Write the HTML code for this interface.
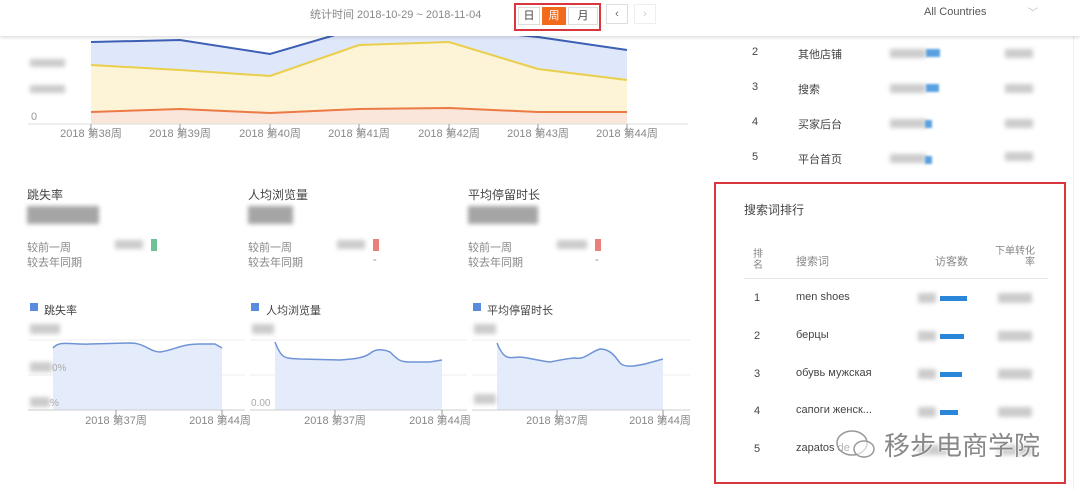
<!DOCTYPE html>
<html><head><meta charset="utf-8"><style>
*{margin:0;padding:0;box-sizing:border-box}
body{width:1080px;height:489px;background:#fff;position:relative;overflow:hidden;font-family:"Liberation Sans","Noto Sans CJK SC",sans-serif;color:#444;font-size:11px}
.a{position:absolute;white-space:nowrap}
.g{color:#888}
.blur{position:absolute;background:#bbb;filter:blur(2px);opacity:.75}
.hdr{position:absolute;left:0;top:0;width:1080px;height:36px;background:#fff;box-shadow:0 2px 3px rgba(0,0,0,.12);z-index:5}
</style></head><body>
<svg class="a" style="left:0;top:0" width="700" height="489">
<polygon points="91,42 180,40 270,54 359,28 449,28 538,37 627,50 627,124 91,124" fill="#dfe7fb"/>
<polygon points="91,65 180,70 270,76 359,45 449,42 538,69 627,80 627,124 91,124" fill="#fdf3d6"/>
<polygon points="91,112 180,109 270,113 359,109 449,108 538,112 627,112 627,124 91,124" fill="#fbe6dc"/>
<polyline points="91,42 180,40 270,54 359,28 449,28 538,37 627,50" fill="none" stroke="#3d5fb5" stroke-width="2"/>
<polyline points="91,65 180,70 270,76 359,45 449,42 538,69 627,80" fill="none" stroke="#e9cf4c" stroke-width="2"/>
<polyline points="91,112 180,109 270,113 359,109 449,108 538,112 627,112" fill="none" stroke="#ec7a45" stroke-width="2"/>
<line x1="28" y1="124" x2="688" y2="124" stroke="#ddd"/>
<g stroke="#999"><line x1="91" y1="124" x2="91" y2="134"/><line x1="180" y1="124" x2="180" y2="134"/><line x1="270" y1="124" x2="270" y2="134"/><line x1="359" y1="124" x2="359" y2="134"/><line x1="449" y1="124" x2="449" y2="134"/><line x1="538" y1="124" x2="538" y2="134"/><line x1="627" y1="124" x2="627" y2="134"/></g>
<g font-size="11" fill="#888" font-family="Liberation Sans,Noto Sans CJK SC,sans-serif" text-anchor="middle"><text x="91" y="137">2018 第38周</text><text x="180" y="137">2018 第39周</text><text x="270" y="137">2018 第40周</text><text x="359" y="137">2018 第41周</text><text x="449" y="137">2018 第42周</text><text x="538" y="137">2018 第43周</text><text x="627" y="137">2018 第44周</text></g>
<text x="31" y="120" font-size="11" fill="#999">0</text>
<g stroke="#eee"><line x1="28" y1="340" x2="245" y2="340"/><line x1="28" y1="375" x2="245" y2="375"/><line x1="250" y1="340" x2="467" y2="340"/><line x1="250" y1="375" x2="467" y2="375"/><line x1="472" y1="340" x2="690" y2="340"/><line x1="472" y1="375" x2="690" y2="375"/></g>
<path d="M53,348 C60,340 70,345 90,344 L130,343 C145,343 150,352 160,352 C175,350 180,344 200,344 L215,344 L222,348 L222,410 L53,410Z" fill="#e4ecfb"/>
<path d="M53,348 C60,340 70,345 90,344 L130,343 C145,343 150,352 160,352 C175,350 180,344 200,344 L215,344 L222,348" fill="none" stroke="#6e94d6" stroke-width="1.5"/>
<path d="M275,342 C282,360 285,358 300,359 L340,360 C355,359 365,358 372,352 C378,348 385,350 390,352 C398,360 400,362 410,362 L430,362 L442,360 L442,410 L275,410Z" fill="#e4ecfb"/>
<path d="M275,342 C282,360 285,358 300,359 L340,360 C355,359 365,358 372,352 C378,348 385,350 390,352 C398,360 400,362 410,362 L430,362 L442,360" fill="none" stroke="#6e94d6" stroke-width="1.5"/>
<path d="M497,343 C504,360 508,358 520,357 C530,358 535,360 550,362 C560,360 570,358 575,358 C585,360 590,352 600,349 C610,349 615,356 620,363 C625,368 635,366 645,364 L663,359 L663,410 L497,410Z" fill="#e4ecfb"/>
<path d="M497,343 C504,360 508,358 520,357 C530,358 535,360 550,362 C560,360 570,358 575,358 C585,360 590,352 600,349 C610,349 615,356 620,363 C625,368 635,366 645,364 L663,359" fill="none" stroke="#6e94d6" stroke-width="1.5"/>
<g stroke="#ccc"><line x1="28" y1="410" x2="245" y2="410"/><line x1="250" y1="410" x2="467" y2="410"/><line x1="472" y1="410" x2="690" y2="410"/></g>
<g stroke="#999"><line x1="116" y1="410" x2="116" y2="420"/><line x1="222" y1="410" x2="222" y2="420"/><line x1="335" y1="410" x2="335" y2="420"/><line x1="442" y1="410" x2="442" y2="420"/><line x1="557" y1="410" x2="557" y2="420"/><line x1="663" y1="410" x2="663" y2="420"/></g>
<g font-size="11" fill="#888" font-family="Liberation Sans,Noto Sans CJK SC,sans-serif" text-anchor="middle"><text x="116" y="424">2018 第37周</text><text x="220" y="424">2018 第44周</text><text x="335" y="424">2018 第37周</text><text x="440" y="424">2018 第44周</text><text x="557" y="424">2018 第37周</text><text x="660" y="424">2018 第44周</text></g>
<g font-size="10" fill="#aaa"><text x="52" y="371">0%</text><text x="50" y="406">%</text><text x="251" y="406">0.00</text></g>
</svg>
<div class="blur" style="left:30px;top:59px;width:35px;height:8px"></div>
<div class="blur" style="left:30px;top:85px;width:35px;height:8px"></div>
<div class="blur" style="left:30px;top:324px;width:30px;height:10px"></div>
<div class="blur" style="left:30px;top:362px;width:22px;height:10px"></div>
<div class="blur" style="left:30px;top:397px;width:20px;height:10px"></div>
<div class="blur" style="left:252px;top:324px;width:22px;height:10px"></div>
<div class="blur" style="left:474px;top:324px;width:22px;height:10px"></div>
<div class="blur" style="left:474px;top:394px;width:22px;height:10px"></div>

<div class="hdr">
<div class="a g" style="left:310px;top:6px;font-size:11px">统计时间 2018-10-29 ~ 2018-11-04</div>
<div class="a" style="left:514px;top:3px;width:87px;height:28px;border:2px solid #d9363e"></div>
<div class="a" style="left:518px;top:7px;width:22px;height:18px;border:1px solid #ddd;text-align:center;line-height:16px">日</div>
<div class="a" style="left:542px;top:7px;width:24px;height:18px;background:#f26a1b;color:#fff;text-align:center;line-height:18px">周</div>
<div class="a" style="left:568px;top:7px;width:30px;height:18px;border:1px solid #ddd;text-align:center;line-height:16px">月</div>
<div class="a" style="left:606px;top:4px;width:22px;height:20px;border:1px solid #ddd;text-align:center;line-height:18px;color:#666">‹</div>
<div class="a" style="left:634px;top:4px;width:22px;height:20px;border:1px solid #eee;text-align:center;line-height:18px;color:#ccc">›</div>
<div class="a" style="left:924px;top:6px;color:#555">All Countries</div>
<div class="a" style="left:1028px;top:4px;color:#bbb;font-size:10px">﹀</div>
</div>

<div class="a" style="left:27px;top:186px;font-size:12px">跳失率</div>
<div class="a" style="left:248px;top:186px;font-size:12px">人均浏览量</div>
<div class="a" style="left:468px;top:186px;font-size:12px">平均停留时长</div>
<div class="blur" style="left:27px;top:206px;width:72px;height:18px;background:#888"></div>
<div class="blur" style="left:248px;top:206px;width:45px;height:18px;background:#888"></div>
<div class="blur" style="left:468px;top:206px;width:70px;height:18px;background:#888"></div>
<div class="a g" style="left:27px;top:239px">较前一周</div><div class="a g" style="left:27px;top:254px">较去年同期</div>
<div class="a g" style="left:248px;top:239px">较前一周</div><div class="a g" style="left:248px;top:254px">较去年同期</div>
<div class="a g" style="left:468px;top:239px">较前一周</div><div class="a g" style="left:468px;top:254px">较去年同期</div>
<div class="blur" style="left:115px;top:240px;width:28px;height:9px"></div><div class="a" style="left:151px;top:239px;width:6px;height:12px;background:#6cc294"></div>
<div class="blur" style="left:337px;top:240px;width:28px;height:9px"></div><div class="a" style="left:373px;top:239px;width:6px;height:12px;background:#e9807c"></div>
<div class="blur" style="left:557px;top:240px;width:30px;height:9px"></div><div class="a" style="left:595px;top:239px;width:6px;height:12px;background:#e9807c"></div>
<div class="a g" style="left:373px;top:254px">-</div><div class="a g" style="left:595px;top:254px">-</div>
<div class="a" style="left:30px;top:303px;width:8px;height:8px;background:#5b8bdc"></div><div class="a" style="left:44px;top:302px">跳失率</div>
<div class="a" style="left:251px;top:303px;width:8px;height:8px;background:#5b8bdc"></div><div class="a" style="left:266px;top:302px">人均浏览量</div>
<div class="a" style="left:473px;top:303px;width:8px;height:8px;background:#5b8bdc"></div><div class="a" style="left:487px;top:302px">平均停留时长</div>

<div class="a" style="left:1073px;top:36px;width:1px;height:453px;background:#eee"></div>
<div class="a" style="left:752px;top:46px">2</div><div class="a" style="left:798px;top:46px">其他店铺</div>
<div class="a" style="left:752px;top:81px">3</div><div class="a" style="left:798px;top:81px">搜索</div>
<div class="a" style="left:752px;top:116px">4</div><div class="a" style="left:798px;top:116px">买家后台</div>
<div class="a" style="left:752px;top:151px">5</div><div class="a" style="left:798px;top:151px">平台首页</div>
<div class="blur" style="left:890px;top:49px;width:36px;height:9px"></div><div class="a" style="left:926px;top:49px;width:14px;height:8px;background:#5aa0e0;filter:blur(1px)"></div><div class="blur" style="left:1005px;top:49px;width:28px;height:9px"></div>
<div class="blur" style="left:890px;top:84px;width:36px;height:9px"></div><div class="a" style="left:926px;top:84px;width:13px;height:8px;background:#5aa0e0;filter:blur(1px)"></div><div class="blur" style="left:1005px;top:84px;width:28px;height:9px"></div>
<div class="blur" style="left:890px;top:119px;width:36px;height:9px"></div><div class="a" style="left:925px;top:120px;width:7px;height:8px;background:#5aa0e0;filter:blur(1px)"></div><div class="blur" style="left:1005px;top:119px;width:28px;height:9px"></div>
<div class="blur" style="left:890px;top:154px;width:36px;height:9px"></div><div class="a" style="left:925px;top:156px;width:7px;height:8px;background:#5aa0e0;filter:blur(1px)"></div><div class="blur" style="left:1005px;top:152px;width:28px;height:9px"></div>

<div class="a" style="left:714px;top:182px;width:352px;height:302px;border:2px solid #d9363e"></div>
<div class="a" style="left:744px;top:201px;font-size:12px">搜索词排行</div>
<div class="a g" style="left:753px;top:249px;font-size:10px;line-height:11px;white-space:normal;width:12px">排名</div>
<div class="a g" style="left:796px;top:253px">搜索词</div>
<div class="a g" style="left:935px;top:253px">访客数</div>
<div class="a g" style="left:991px;top:246px;font-size:10px;line-height:11px;text-align:right;width:44px;white-space:normal">下单转化率</div>
<div class="a" style="left:744px;top:278px;width:304px;height:1px;background:#e8e8e8"></div>
<div class="a" style="left:754px;top:292px">1</div><div class="a" style="left:796px;top:291px">men shoes</div>
<div class="a" style="left:754px;top:330px">2</div><div class="a" style="left:796px;top:329px">берцы</div>
<div class="a" style="left:754px;top:368px">3</div><div class="a" style="left:796px;top:367px">обувь мужская</div>
<div class="a" style="left:754px;top:405px">4</div><div class="a" style="left:796px;top:404px">сапоги женск...</div>
<div class="a" style="left:754px;top:443px">5</div><div class="a" style="left:796px;top:442px">zapatos de</div>
<div class="blur" style="left:918px;top:293px;width:18px;height:10px"></div><div class="a" style="left:940px;top:296px;width:27px;height:5px;background:#2a86d8"></div><div class="blur" style="left:998px;top:293px;width:34px;height:10px"></div>
<div class="blur" style="left:918px;top:331px;width:18px;height:10px"></div><div class="a" style="left:940px;top:334px;width:24px;height:5px;background:#2a86d8"></div><div class="blur" style="left:998px;top:331px;width:34px;height:10px"></div>
<div class="blur" style="left:918px;top:369px;width:18px;height:10px"></div><div class="a" style="left:940px;top:372px;width:22px;height:5px;background:#2a86d8"></div><div class="blur" style="left:998px;top:369px;width:34px;height:10px"></div>
<div class="blur" style="left:918px;top:407px;width:18px;height:10px"></div><div class="a" style="left:940px;top:410px;width:18px;height:5px;background:#2a86d8"></div><div class="blur" style="left:998px;top:407px;width:34px;height:10px"></div>
<div class="blur" style="left:918px;top:445px;width:30px;height:10px"></div><div class="blur" style="left:998px;top:445px;width:34px;height:10px"></div>
<svg class="a" style="left:832px;top:425px" width="50" height="40"><ellipse cx="20" cy="18" rx="15" ry="12" fill="rgba(255,255,255,.6)" stroke="#999" stroke-width="1.5"/><ellipse cx="32" cy="24" rx="10" ry="8" fill="rgba(255,255,255,.6)" stroke="#999" stroke-width="1.5"/></svg>
<div class="a" style="left:884px;top:426px;font-size:26px;color:#888;text-shadow:0 0 2px #fff,0 0 2px #fff">移步电商学院</div>
</body></html>
